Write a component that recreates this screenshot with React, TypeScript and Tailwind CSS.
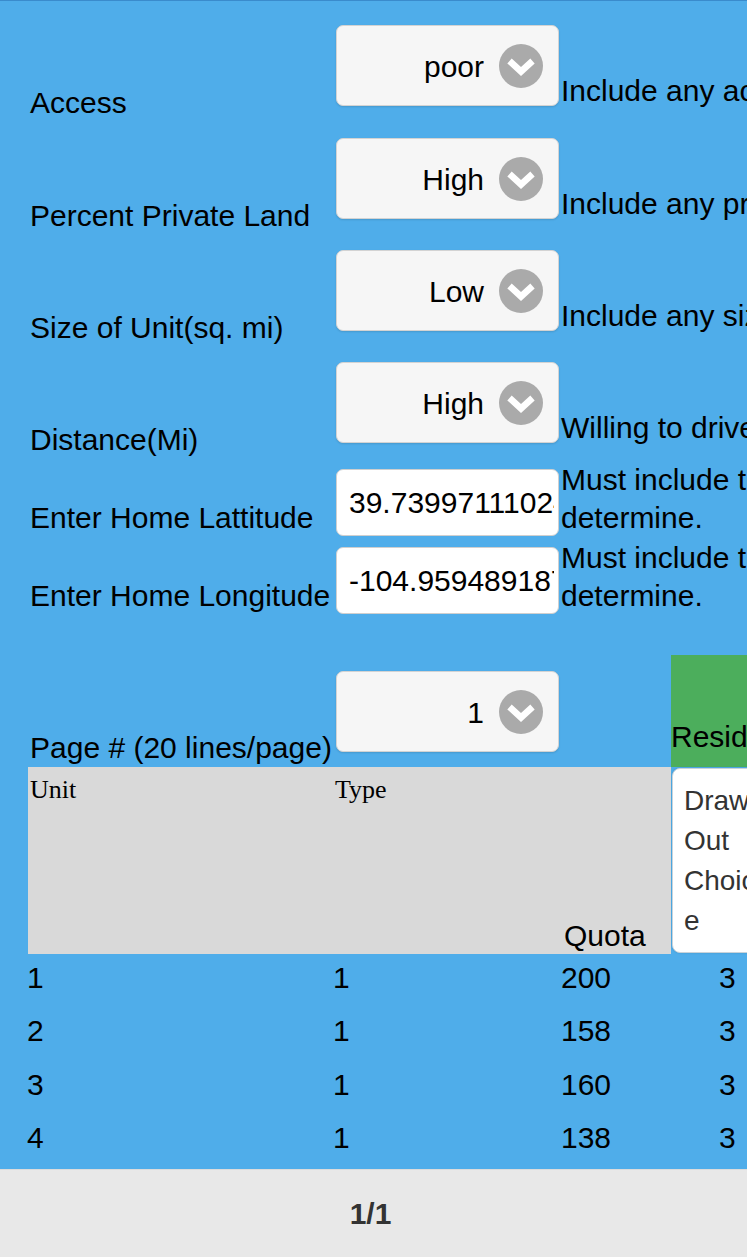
import React from "react";

const selectRows = [
	{ label: "Access", value: "poor", desc: "Include any access level", h: "h-[113px]" },
	{ label: "Percent Private Land", value: "High", desc: "Include any private land amount", h: "h-[112px]" },
	{ label: "Size of Unit(sq. mi)", value: "Low", desc: "Include any size of unit", h: "h-[112px]" },
	{ label: "Distance(Mi)", value: "High", desc: "Willing to drive any distance", h: "h-[107px]" },
];

const coordRows = [
	{ label: "Enter Home Lattitude", value: "39.739971110248", h: "h-[78px]" },
	{ label: "Enter Home Longitude", value: "-104.959489187", h: "h-[108px]" },
];

const units = [
	{ unit: "1", type: "1", quota: "200", draw: "3" },
	{ unit: "2", type: "1", quota: "158", draw: "3" },
	{ unit: "3", type: "1", quota: "160", draw: "3" },
	{ unit: "4", type: "1", quota: "138", draw: "3" },
];

function SelectBox({ value, className = "" }: { value: string; className?: string }) {
	return (
		<div
			className={`w-[223px] h-[81px] shrink-0 flex items-center justify-end gap-[15px] pr-[15px] pt-[2px] rounded-[7px] border border-[#d3d3d3] bg-[#f6f6f6] shadow-[0_1px_2px_rgba(0,0,0,0.12)] ${className}`}
		>
			<span className="leading-[34px]">{value}</span>
			<span className="w-[44px] h-[44px] rounded-full bg-[#aaaaaa] flex items-center justify-center -mt-[2px]">
				<svg width="44" height="44" viewBox="0 0 44 44">
					<polyline
						points="10.5,17 22,27.5 33.5,17"
						fill="none"
						stroke="white"
						strokeWidth="6.5"
						strokeLinejoin="miter"
					/>
				</svg>
			</span>
		</div>
	);
}

export default function App() {
	return (
		<div className="w-[747px] h-[1257px] overflow-hidden flex flex-col bg-[#4fadea] text-black text-[30px] font-['Liberation_Sans',Arial,sans-serif]">
			<div className="h-[1px] bg-[#3a8bcc] shrink-0" />
			<div className="pl-[28px] pt-[24px] w-[1100px]">
				{/* filters */}
				{selectRows.map((r) => (
					<div key={r.label} className={`flex items-start ${r.h}`}>
						<div className="w-[308px] shrink-0 pl-[2px] mt-[61px] leading-[34px] whitespace-nowrap">
							{r.label}
						</div>
						<SelectBox value={r.value} />
						<div className="ml-[2px] mt-[49px] leading-[34px] whitespace-nowrap">{r.desc}</div>
					</div>
				))}
				{coordRows.map((r) => (
					<div key={r.label} className={`flex items-start ${r.h}`}>
						<div className="w-[308px] shrink-0 pl-[2px] mt-[32px] leading-[34px] whitespace-nowrap">
							{r.label}
						</div>
						<input
							readOnly
							value={r.value}
							className="w-[223px] h-[67px] shrink-0 bg-white border border-[#cfcfcf] rounded-[7px] pl-[12px] pr-[4px] text-black outline-none"
						/>
						<div className="ml-[2px] -mt-[8px] leading-[38px] whitespace-nowrap">
							<div>Must include this to</div>
							<div>determine.</div>
						</div>
					</div>
				))}

				{/* paging */}
				<div className="flex items-start h-[112px]">
					<div className="w-[308px] shrink-0 pl-[2px] mt-[76px] leading-[34px] whitespace-nowrap">
						Page # (20 lines/page)
					</div>
					<SelectBox value="1" className="mt-[16px]" />
					<div className="ml-[112px] w-[200px] h-full bg-[#4cae5c] pt-[65px] leading-[34px] whitespace-nowrap">
						Residency Status
					</div>
				</div>

				{/* table header */}
				<div className="flex h-[187px]">
					<div className="w-[643px] shrink-0 bg-[#d9d9d9] flex">
						<div className="w-[307px] pl-[2px] pt-[3px] text-[26px] font-['Liberation_Serif',serif]">Unit</div>
						<div className="w-[229px] pt-[3px] text-[26px] font-['Liberation_Serif',serif]">Type</div>
						<div className="w-[107px] flex items-end pb-[1px] leading-[34px]">Quota</div>
					</div>
					<div className="w-[200px] ml-[1px] my-[1px] bg-white rounded-[8px] border border-[#c9d3da] shadow-[0_0_2px_rgba(0,0,0,0.15)] pl-[11px] pt-[12px] text-[28px] leading-[40px] text-[#333333]">
						<div>Draw</div>
						<div>Out</div>
						<div>Choic</div>
						<div>e</div>
					</div>
				</div>

				{/* rows */}
				{units.map((u) => (
					<div key={u.unit} className="flex h-[53.33px] pt-[7px] leading-[34px] -ml-[1px]">
						<div className="w-[306px]">{u.unit}</div>
						<div className="w-[228px]">{u.type}</div>
						<div className="w-[158px]">{u.quota}</div>
						<div>{u.draw}</div>
					</div>
				))}
			</div>
			<div className="flex-1" />
			<div className="h-[88px] shrink-0 bg-[#e8e8e8] border-t border-[#dcdcdc] flex items-center justify-center pr-[6px] font-bold text-[#333333]">
				1/1
			</div>
		</div>
	);
}
